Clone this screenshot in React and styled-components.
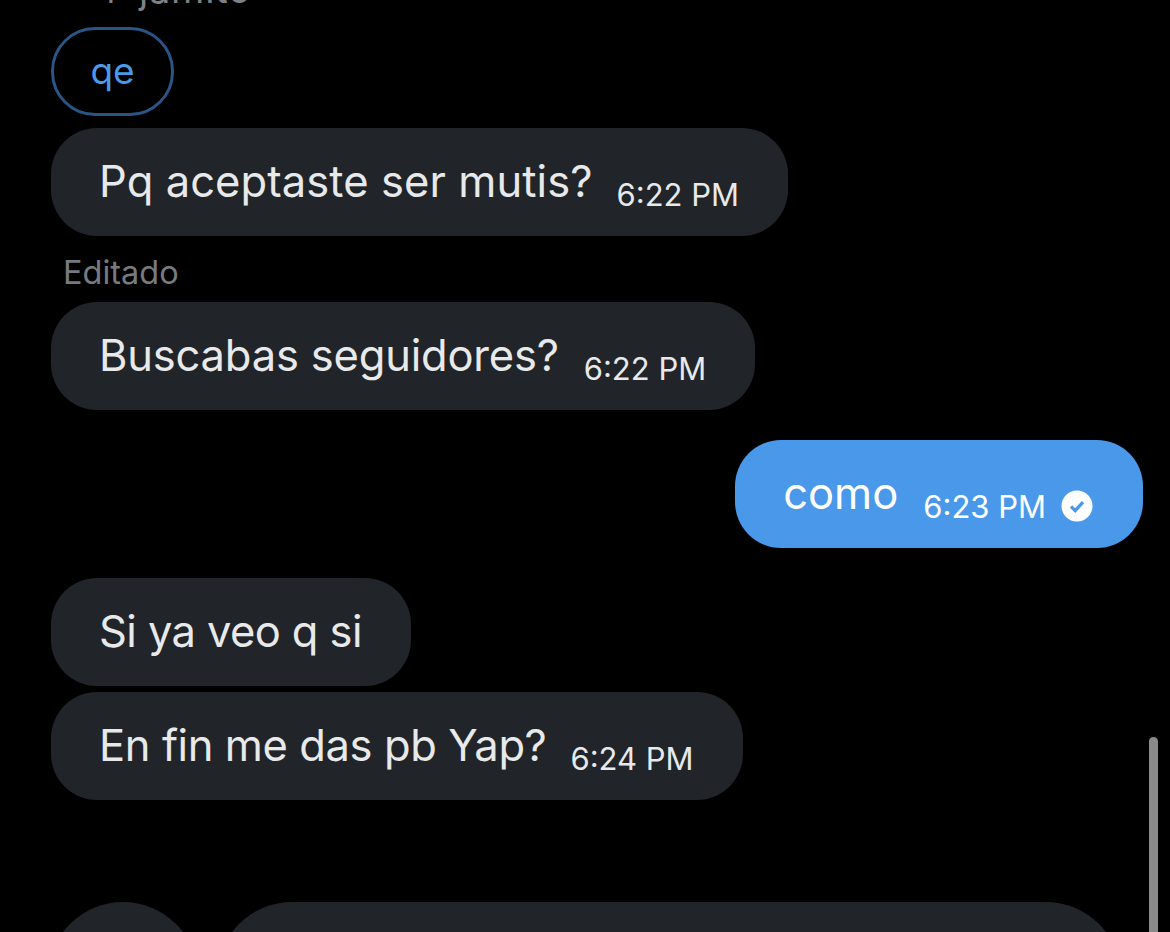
import React from "react";
import styled, { createGlobalStyle } from "styled-components";

const Global = createGlobalStyle`
  html, body { margin: 0; padding: 0; background: #000; }
  body { font-family: Inter, "Liberation Sans", sans-serif; }
`;

const Page = styled.div`
  position: relative;
  width: 1170px;
  height: 932px;
  overflow: hidden;
  background: #000;
  color: #e7e9ea;
`;

const Thread = styled.div`
  display: flex;
  flex-direction: column;
  padding: 0 27px 0 51px;
`;

const ReplyNote = styled.div`
  margin: -32px 0 17px 44px;
  height: 42px;
  font-size: 38px;
  line-height: 42px;
  letter-spacing: 0.8px;
  color: #7e8286;
  white-space: nowrap;
`;

const Quote = styled.div`
  box-sizing: border-box;
  align-self: flex-start;
  display: flex;
  align-items: center;
  justify-content: center;
  width: 123px;
  height: 89px;
  padding-bottom: 3px;
  border: 3px solid #2a5584;
  border-radius: 44px;
  color: #4b99e9;
  font-size: 37px;
`;

const Bubble = styled.div`
  box-sizing: border-box;
  display: flex;
  align-items: center;
  height: 108px;
  padding: 0 49px 0 48px;
  border-radius: 46px;
  align-self: ${(p) => (p.$mine ? "flex-end" : "flex-start")};
  background: ${(p) => (p.$mine ? "#4a98e9" : "#212428")};
  color: ${(p) => (p.$mine ? "#fff" : "#e7e9ea")};
  margin-top: ${(p) => p.$top || 0}px;
`;

const Body = styled.span`
  font-size: 43.5px;
  line-height: 1;
  white-space: nowrap;
  letter-spacing: ${(p) => p.$track || 0}px;
`;

const Time = styled.span`
  font-size: 31px;
  line-height: 1;
  margin-left: ${(p) => p.$gap || 26}px;
  margin-top: 24px;
  white-space: nowrap;
`;

const Edited = styled.div`
  margin: 15px 0 14px 12px;
  font-size: 32.5px;
  line-height: 44px;
  height: 37px;
  color: #777b80;
`;

const Check = styled.svg`
  width: 32px;
  height: 32px;
  margin-left: 15px;
  margin-top: 24px;
  margin-right: 1px;
  flex: none;
`;

const Composer = styled.div`
  display: flex;
  gap: 19px;
  margin: 102px 22px 0 -3px;
`;

const Round = styled.div`
  width: 150px;
  height: 150px;
  border-radius: 50%;
  background: #212428;
  flex: none;
`;

const Field = styled.div`
  flex: 1;
  height: 150px;
  border-radius: 75px;
  background: #212428;
`;

const Scrollbar = styled.div`
  position: absolute;
  left: 1149px;
  top: 737px;
  width: 9px;
  height: 210px;
  border-radius: 5px;
  background: #8a8a8a;
`;

export default function App() {
  return (
    <Page>
      <Global />
      <Thread>
        <ReplyNote>↑ jamito</ReplyNote>
        <Quote>qe</Quote>
        <Bubble $top={12}>
          <Body $track={0.08}>Pq aceptaste ser mutis?</Body>
          <Time $gap={24}>6:22 PM</Time>
        </Bubble>
        <Edited>Editado</Edited>
        <Bubble>
          <Body $track={-0.2}>Buscabas seguidores?</Body>
          <Time $gap={25}>6:22 PM</Time>
        </Bubble>
        <Bubble $mine $top={30}>
          <Body>como</Body>
          <Time $gap={25}>6:23 PM</Time>
          <Check viewBox="0 0 32 32" aria-hidden="true">
            <circle cx="16" cy="16" r="15.5" fill="#fff" />
            <path d="M10 16.5l4.2 4.2L22 12.2" fill="none" stroke="#4a98e9" strokeWidth="3.2" />
          </Check>
        </Bubble>
        <Bubble $top={30}>
          <Body $track={-0.6}>Si ya veo q si</Body>
        </Bubble>
        <Bubble $top={6}>
          <Body $track={-0.4}>En fin me das pb Yap?</Body>
          <Time $gap={24}>6:24 PM</Time>
        </Bubble>
        <Composer>
          <Round />
          <Field />
        </Composer>
      </Thread>
      <Scrollbar />
    </Page>
  );
}
